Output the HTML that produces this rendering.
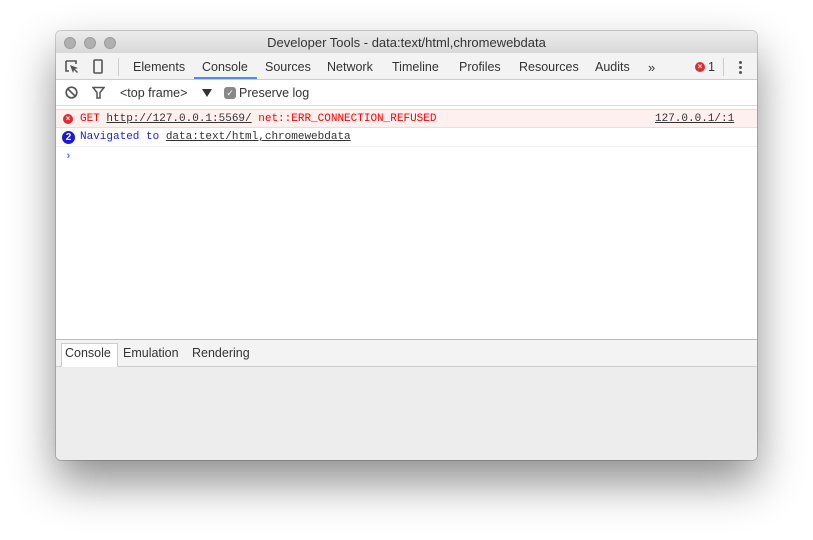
<!DOCTYPE html>
<html><head><style>
*{margin:0;padding:0;box-sizing:border-box}
body{width:813px;height:540px;background:#fff;position:relative;overflow:hidden;font-family:"Liberation Sans",sans-serif;font-size:12px;color:#333}
.win{position:absolute;left:56px;top:31px;width:701px;height:429px;background:#fff;border-radius:5px;overflow:hidden;box-shadow:0 22px 45px rgba(0,0,0,.45),0 0 0 1px rgba(0,0,0,.18)}
.title{height:22px;background:linear-gradient(#ececec,#d8d8d8);text-align:center;line-height:23px;font-size:13px;color:#333;position:relative}
.dot{position:absolute;top:6px;width:12px;height:12px;border-radius:50%;background:#b0b0b0;border:1px solid #9c9c9c}
.tb{height:27px;background:#f3f3f3;border-bottom:1px solid #ccc;position:relative}
.tab{position:absolute;top:7px;font-size:12.5px;color:#333}
.ab{position:absolute}
.ct{height:26px;border-bottom:1px solid #ddd;position:relative}
.mono{font-family:"Liberation Mono",monospace;font-size:11px}
.err{position:absolute;top:78px;left:0;right:0;height:19px;background:#fff0f0;border-top:1px solid #fbd6d6;border-bottom:1px solid #fbd6d6;color:#f00}
.nav{position:absolute;top:97px;left:0;right:0;height:19px;border-bottom:1px solid #eee;color:#2222dd}
u{color:#333}
.drawer{position:absolute;top:308px;left:0;right:0;bottom:0;background:#ededed;border-top:1px solid #bbb}
.dtb{height:27px;background:#f3f3f3;border-bottom:1px solid #ccc;position:relative}
.dtab{position:absolute;top:6px;font-size:12.5px;color:#333}
</style></head><body>
<div class="win">
<div class="title"><span class="dot" style="left:8px"></span><span class="dot" style="left:28px"></span><span class="dot" style="left:48px"></span>Developer Tools - data:text/html,chromewebdata</div>
<div class="tb">
<svg class="ab" style="left:9px;top:7px" width="14" height="14" viewBox="0 0 14 14"><path d="M1 1h10v3M1 1v10h3" fill="none" stroke="#555" stroke-width="1.6"/><path d="M5 5l8 3-3 1 3 3-1 1-3-3-1 3z" fill="#555"/></svg>
<svg class="ab" style="left:37px;top:6px" width="10" height="15" viewBox="0 0 10 15"><rect x="1" y="1" width="8" height="13" rx="1" fill="none" stroke="#555" stroke-width="1.6"/></svg>
<div class="ab" style="left:62px;top:5px;width:1px;height:18px;background:#ccc"></div>
<span class="tab" style="left:77px">Elements</span>
<span class="tab" style="left:146px">Console</span>
<div class="ab" style="left:138px;top:24px;width:63px;height:2px;background:#4d8ef0"></div>
<span class="tab" style="left:209px">Sources</span>
<span class="tab" style="left:271px">Network</span>
<span class="tab" style="left:336px">Timeline</span>
<span class="tab" style="left:403px">Profiles</span>
<span class="tab" style="left:463px">Resources</span>
<span class="tab" style="left:539px">Audits</span>
<span class="tab" style="left:592px;font-size:13px">»</span>
<div class="ab" style="left:639px;top:9px;width:10px;height:10px;border-radius:50%;background:#e2292b;color:#fff;font-size:8px;line-height:10px;text-align:center;font-weight:bold">×</div>
<span class="tab" style="left:652px">1</span>
<div class="ab" style="left:667px;top:5px;width:1px;height:18px;background:#ccc"></div>
<div class="ab" style="left:683px;top:8px;width:3px;height:3px;background:#555;border-radius:50%;box-shadow:0 5px 0 #555,0 10px 0 #555"></div>
</div>
<div class="ct">
<svg class="ab" style="left:9px;top:6px" width="13" height="13" viewBox="0 0 13 13"><circle cx="6.5" cy="6.5" r="5.3" fill="none" stroke="#555" stroke-width="1.7"/><path d="M2.8 2.8l7.4 7.4" stroke="#555" stroke-width="1.7"/></svg>
<svg class="ab" style="left:36px;top:6px" width="13" height="13" viewBox="0 0 13 13"><path d="M1 1.5h11L8 6.5v5.5H5V6.5z" fill="none" stroke="#555" stroke-width="1.5"/></svg>
<span class="tab" style="left:64px;top:6px">&lt;top frame&gt;</span>
<svg class="ab" style="left:146px;top:9px" width="10" height="8" viewBox="0 0 10 8"><path d="M0 0h10L5 8z" fill="#333"/></svg>
<div class="ab" style="left:168px;top:7px;width:12px;height:12px;border-radius:3px;background:#888;color:#fff;font-size:9px;line-height:12px;text-align:center">✓</div>
<span class="tab" style="left:183px;top:6px">Preserve log</span>
</div>
<div class="err mono">
<div class="ab" style="left:7px;top:4px;width:10px;height:10px;border-radius:50%;background:#e2292b;color:#fff;font-size:8px;line-height:10px;text-align:center;font-family:'Liberation Sans';font-weight:bold">×</div>
<span class="ab" style="left:24px;top:3px">GET <u>http://127.0.0.1:5569/</u> net::ERR_CONNECTION_REFUSED</span>
<span class="ab" style="left:599px;top:3px"><u>127.0.0.1/:1</u></span>
</div>
<div class="nav mono">
<div class="ab" style="left:6px;top:3px;width:13px;height:13px;border-radius:50%;background:#1a1ad8;color:#fff;font-size:10px;line-height:13px;text-align:center;font-family:'Liberation Sans';font-weight:bold">2</div>
<span class="ab" style="left:24px;top:3px">Navigated to <u>data:text/html,chromewebdata</u></span>
</div>
<span class="ab mono" style="left:9px;top:120px;color:#367cf1;font-weight:bold">›</span>
<div class="drawer">
<div class="dtb">
<div class="ab" style="left:5px;top:3px;width:57px;height:24px;background:#fff;border:1px solid #ccc;border-bottom:none"></div>
<span class="dtab" style="left:9px">Console</span>
<span class="dtab" style="left:67px">Emulation</span>
<span class="dtab" style="left:136px">Rendering</span>
</div>
</div>
</div>
</body></html>
